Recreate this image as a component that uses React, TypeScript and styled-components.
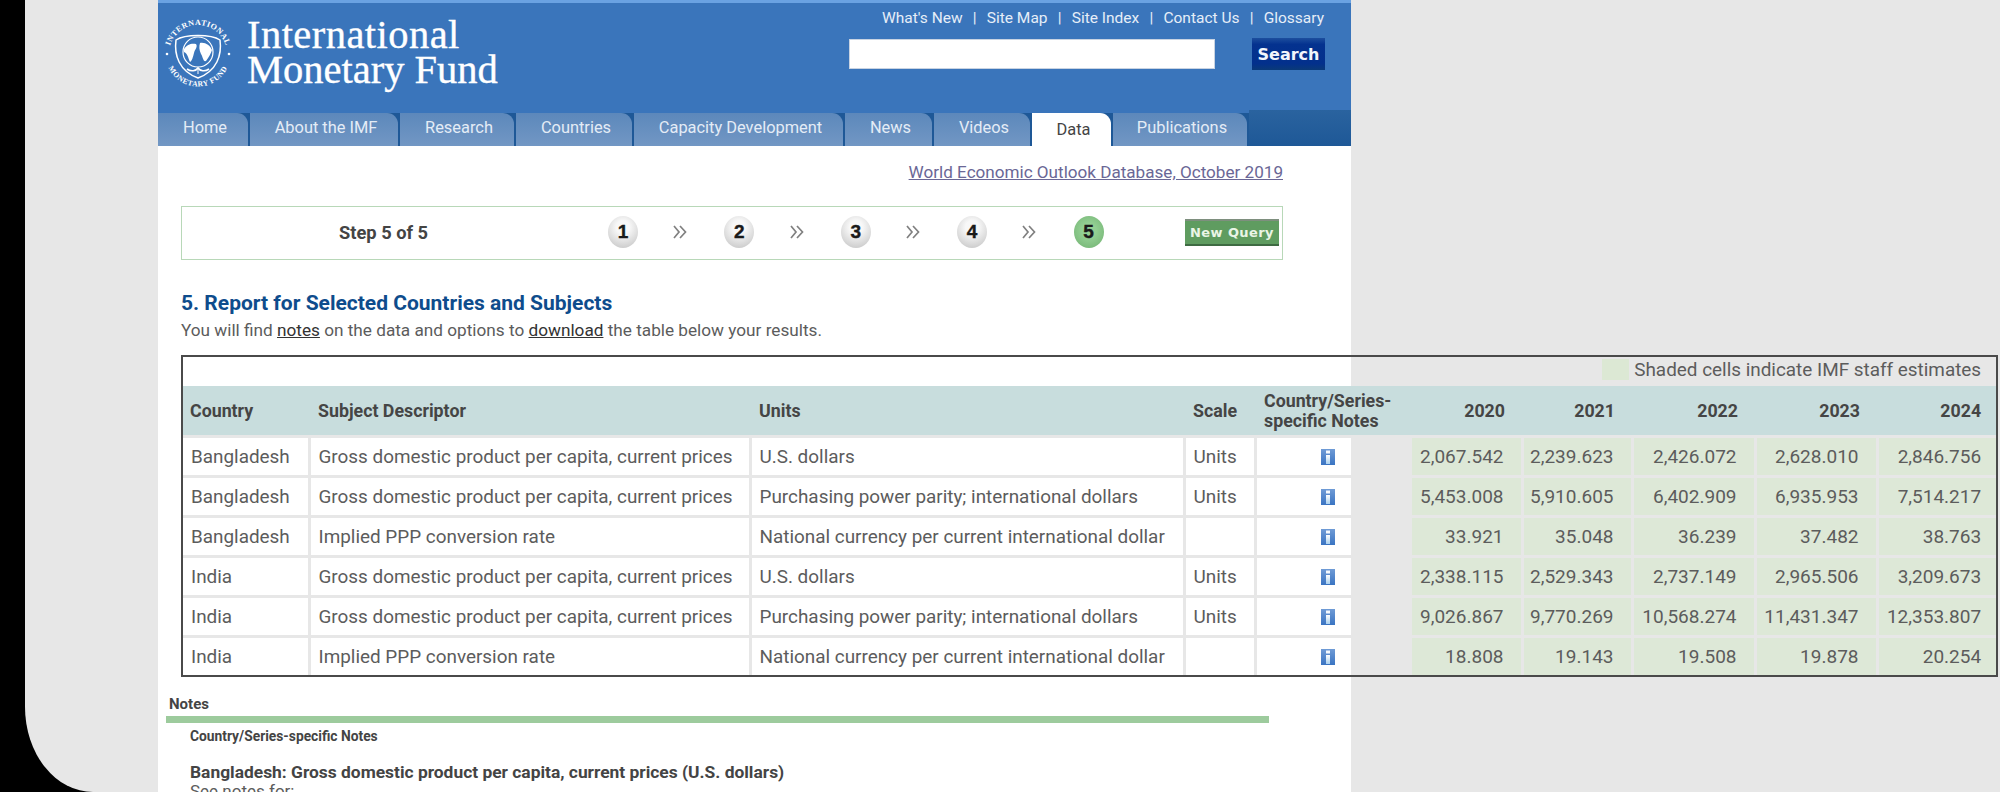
import React from "react";
import styled, { createGlobalStyle } from "styled-components";

const Global = createGlobalStyle`
  html, body { margin: 0; padding: 0; background: #000; }
  body { font-family: Roboto, "Liberation Sans", sans-serif; color: #555; width: 2000px; height: 792px; overflow: hidden; }
`;

const Screen = styled.div`
  width: 1975px; height: 792px; margin-left: 25px; background: #e7e7e7;
  border-bottom-left-radius: 68px 85px; overflow: hidden;
`;
const Sheet = styled.div`
  width: 1193px; height: 792px; margin-left: 133px; background: #fff;
`;
const Header = styled.header`
  height: 146px; background: #3a75bb; border-top: 3px solid #6aa2e2; box-sizing: border-box;
  display: flex; flex-direction: column;
`;
const Masthead = styled.div`
  flex: 1; display: flex; justify-content: space-between; min-height: 0;
`;
const Brand = styled.div`
  display: flex; align-items: flex-start; padding: 14px 0 0 5px; gap: 14px;
`;
const SealSlot = styled.div`
  margin-top: 2px; line-height: 0;
`;
const Wordmark = styled.div`
  font-family: "Liberation Serif", serif; font-size: 40.5px; line-height: 35px; color: #fff; white-space: nowrap;
  -webkit-text-stroke: .35px #fff;
`;
const WordmarkWide = styled.span`
  letter-spacing: .45px;
`;
const Utility = styled.div`
  width: 490px; padding: 7px 26px 0 0; box-sizing: border-box;
  display: flex; flex-direction: column; align-items: flex-end;
`;
const UtilLinks = styled.nav`
  display: flex; gap: 10.2px; font-size: 15.5px; line-height: 17px; color: #e6eef8; white-space: nowrap; margin-right: 1px;
`;
const SearchRow = styled.div`
  display: flex; align-items: center; gap: 37px; margin-top: 11px;
`;
const SearchInput = styled.div`
  width: 366px; height: 30px; box-sizing: border-box; background: #fff; border: 1px solid #c8d3e2;
`;
const SearchButton = styled.div`
  width: 73px; height: 32px; box-sizing: border-box;
  display: flex; align-items: center; justify-content: center;
  background: linear-gradient(#1d4f9e, #04328f 20%, #03308c 80%, #0a3a78);
  color: #f2f6fc; font: bold 16px "DejaVu Sans", sans-serif;
`;
const TabRail = styled.nav`
  height: 36px; display: flex; align-items: flex-end; flex: none;
  background: linear-gradient(transparent 3px, #1e5897 3px);
`;
const Tab = styled.div<{ $w: number; $active?: boolean }>`
  width: ${(p) => p.$w}px; height: 33px; flex: none; box-sizing: border-box;
  margin-right: 2px; border-top-right-radius: 11px; white-space: nowrap;
  display: flex; align-items: center; justify-content: center; font-size: 16.4px;
  padding: 0 0 ${(p) => (p.$active ? 0 : 5)}px 4px;
  background: ${(p) => (p.$active ? "#fff" : "linear-gradient(#5c88bb, #7297c4)")};
  color: ${(p) => (p.$active ? "#444" : "#e4ecf6")};
`;
const TabFill = styled.div`
  flex: 1; height: 36px; background: linear-gradient(#2a639f, #1e5897);
`;
const Content = styled.main`
  padding: 0 0 0 23px; width: 1817px;
`;
const DbLink = styled.div`
  width: 1102px; text-align: right; margin-top: 15px; font-size: 17.1px; line-height: 22px;
  color: #6a6796; text-decoration: underline;
`;
const StepBox = styled.section`
  width: 1102px; height: 54px; margin-top: 23px; box-sizing: border-box;
  border: 1px solid #b8d8b8; display: flex; align-items: center; padding: 0 3px 2px 157px;
`;
const StepLabel = styled.div`
  width: 269px; flex: none; font-weight: 700; font-size: 18.3px; color: #444;
`;
const Steps = styled.div`
  display: flex; align-items: center; gap: 36.2px; flex: 1;
`;
const StepDot = styled.div<{ $active?: boolean }>`
  width: 30px; height: 32px; border-radius: 50%; flex: none;
  display: flex; align-items: center; justify-content: center;
  font: bold 19px "Liberation Sans", sans-serif; color: #1a1a1a;
  -webkit-text-stroke: .4px #1a1a1a;
  background: ${(p) => p.$active
    ? "radial-gradient(circle at 50% 45%, #93cf93 30%, #6fb06f)"
    : "radial-gradient(circle at 50% 35%, #f8f8f8 25%, #bfbfbf)"};
`;
const ChevronMark = styled.svg`
  flex: none; margin: 0 1px 0 -1px;
`;
const NewQuery = styled.div`
  width: 94px; height: 27px; box-sizing: border-box; flex: none;
  display: flex; align-items: center; justify-content: center; white-space: nowrap;
  background: #5f9c60; border-top: 2px solid #7e8f7e; border-bottom: 2px solid #3e6b42;
  color: #eaf5e6; font: bold 13px "DejaVu Sans", sans-serif; letter-spacing: .4px;
`;
const Heading = styled.h2`
  margin: 31px 0 0; font-size: 21px; line-height: 24px; font-weight: 700; color: #0e4c8c;
`;
const Lead = styled.p`
  margin: 5px 0 0; font-size: 17.2px; line-height: 20px; color: #5c5c5c;
  u { color: #333; }
`;
const TableFrame = styled.div`
  margin-top: 15px; width: 1817px; box-sizing: border-box; border: 2px solid #4a4a4a;
`;
const ReportTable = styled.table`
  width: 1813px; table-layout: fixed; border-collapse: collapse; border-style: hidden;
`;
const LegendCell = styled.td`
  height: 29px; padding: 0 15px 0 0; text-align: right; font-size: 18.9px; color: #5c5c5c; vertical-align: middle;
`;
const Legend = styled.span`
  display: inline-flex; align-items: center; gap: 5px; white-space: nowrap;
`;
const Swatch = styled.i`
  display: block; width: 27px; height: 21px; background: #dce8d4;
`;
const HeadCell = styled.th<{ $right?: boolean }>`
  height: 48px; padding: 1px ${(p) => (p.$right ? 17 : 4)}px 0 ${(p) => (p.$right ? 0 : 9)}px;
  background: #c8dddd; border-bottom: 2px solid #333; color: #454545;
  font-size: 17.8px; line-height: 20px; font-weight: 700;
  text-align: ${(p) => (p.$right ? "right" : "left")}; vertical-align: middle;
  &:first-child { padding-left: 7px; }
  &:last-child { padding-right: 15px; }
`;
const Cell = styled.td<{ $right?: boolean; $shaded?: boolean }>`
  height: 37px; box-sizing: content-box; padding: 0 ${(p) => (p.$right ? 17 : 2)}px 0 ${(p) => (p.$right ? 0 : 8)}px;
  border: 3px solid #e7e7e7; white-space: nowrap; overflow: hidden;
  font-size: ${(p) => (p.$right ? 19 : 18.9)}px; color: #5c5c5c; vertical-align: middle;
  text-align: ${(p) => (p.$right ? "right" : "left")};
  background: ${(p) => (p.$shaded ? "#dde8d7" : "transparent")};
  &:last-child { padding-right: 15px; }
`;
const IconCell = styled.td`
  padding: 0 0 0 64px; border: 3px solid #e7e7e7; border-right: none; vertical-align: middle;
  line-height: 0;
`;
const NotesLabel = styled.div`
  margin: 18px 0 0 -12px; font-size: 15px; line-height: 18px; font-weight: 700; color: #444;
`;
const GreenRule = styled.div`
  width: 1103px; height: 7px; margin: 3px 0 0 -15px; background: #9dcb9d;
`;
const NotesSub = styled.div`
  margin: 4px 0 0 9px; font-size: 13.8px; line-height: 18px; font-weight: 700; color: #444;
`;
const NoteTitle = styled.div`
  margin: 17px 0 0 9px; font-size: 17.4px; line-height: 20px; font-weight: 700; color: #444;
`;
const NoteBody = styled.div`
  margin: 0 0 0 9px; font-size: 17px; line-height: 18px; color: #5c5c5c;
`;

const Seal = () => (
  <svg width="70" height="70" viewBox="0 0 70 70" fill="none">
    <defs>
      <path id="sealTop" d="M6 35 A29 29 0 0 1 64 35" />
      <path id="sealBottom" d="M2.5 35 A32.5 32.5 0 0 0 67.5 35" />
    </defs>
    <text fontFamily="Liberation Serif, serif" fontSize="8" fontWeight="700" fill="#fff" letterSpacing=".5">
      <textPath href="#sealTop" startOffset="50%" textAnchor="middle">INTERNATIONAL</textPath>
    </text>
    <text fontFamily="Liberation Serif, serif" fontSize="7.6" fontWeight="700" fill="#fff" letterSpacing=".5">
      <textPath href="#sealBottom" startOffset="50%" textAnchor="middle">MONETARY FUND</textPath>
    </text>
    <circle cx="4" cy="35" r="1.3" fill="#fff" />
    <circle cx="66" cy="35" r="1.3" fill="#fff" />
    <path d="M13 21 C22 15 48 15 57 21 C59 36 54 52 35 59 C16 52 11 36 13 21 Z" stroke="#fff" strokeWidth="1.5" />
    <circle cx="35" cy="33" r="15" stroke="#fff" strokeWidth="1.2" />
    <path d="M21 30 C24 25 29 24 33 25 C35 28 32 30 31 34 C30 38 29 42 27 43 C25 39 25 35 21 33 Z" fill="#fff" />
    <path d="M37 24 C42 23 47 26 49 31 C48 34 46 38 43 42 C40 43 40 38 38 35 C36 31 36 27 37 24 Z" fill="#fff" />
    <path d="M24 50 C28 53 33 52 35 49 C37 52 42 53 46 50" stroke="#fff" strokeWidth="1.6" />
    <path d="M35 49 V55" stroke="#fff" strokeWidth="1" />
  </svg>
);

const Chevrons = () => (
  <ChevronMark width="14" height="14" viewBox="0 0 14 14" fill="none" stroke="#808080" strokeWidth="1.7">
    <path d="M1 1 L6 7 L1 13 M7 1 L12.5 7 L7 13" />
  </ChevronMark>
);

const InfoIcon = () => (
  <svg width="14" height="16" viewBox="0 0 14 16">
    <defs>
      <linearGradient id="infoGrad" x1="0" y1="0" x2="0" y2="1">
        <stop offset="0" stopColor="#6f9bd6" />
        <stop offset="1" stopColor="#3a74c2" />
      </linearGradient>
      <linearGradient id="infoStem" x1="0" y1="0" x2="0" y2="1">
        <stop offset="0" stopColor="#ffffff" />
        <stop offset="1" stopColor="#a8d0ef" />
      </linearGradient>
    </defs>
    <rect width="14" height="16" fill="url(#infoGrad)" />
    <rect x="5" y="1.5" width="4" height="3" fill="#f4f8fd" />
    <rect x="5" y="6" width="4" height="9" fill="url(#infoStem)" />
  </svg>
);

const tabs: [string, number][] = [
  ["Home", 90], ["About the IMF", 148], ["Research", 114], ["Countries", 116],
  ["Capacity Development", 209], ["News", 87], ["Videos", 96], ["Data", 79], ["Publications", 134],
];
const links = ["What's New", "|", "Site Map", "|", "Site Index", "|", "Contact Us", "|", "Glossary"];
const widths = [126, 441, 434, 71, 155, 112, 110, 123, 122, 119];
const years = [2020, 2021, 2022, 2023, 2024];
const G = "Gross domestic product per capita, current prices";
const P = "Purchasing power parity; international dollars";
const N = "National currency per current international dollar";
const I = "Implied PPP conversion rate";
const rows: [string, string, string, string, string[]][] = [
  ["Bangladesh", G, "U.S. dollars", "Units", ["2,067.542", "2,239.623", "2,426.072", "2,628.010", "2,846.756"]],
  ["Bangladesh", G, P, "Units", ["5,453.008", "5,910.605", "6,402.909", "6,935.953", "7,514.217"]],
  ["Bangladesh", I, N, "", ["33.921", "35.048", "36.239", "37.482", "38.763"]],
  ["India", G, "U.S. dollars", "Units", ["2,338.115", "2,529.343", "2,737.149", "2,965.506", "3,209.673"]],
  ["India", G, P, "Units", ["9,026.867", "9,770.269", "10,568.274", "11,431.347", "12,353.807"]],
  ["India", I, N, "", ["18.808", "19.143", "19.508", "19.878", "20.254"]],
];

export default function App() {
  return (
    <>
      <Global />
      <Screen>
        <Sheet>
          <Header>
            <Masthead>
              <Brand>
                <SealSlot><Seal /></SealSlot>
                <Wordmark><WordmarkWide>International</WordmarkWide><br />Monetary Fund</Wordmark>
              </Brand>
              <Utility>
                <UtilLinks>{links.map((l, i) => <span key={i}>{l}</span>)}</UtilLinks>
                <SearchRow>
                  <SearchInput />
                  <SearchButton>Search</SearchButton>
                </SearchRow>
              </Utility>
            </Masthead>
            <TabRail>
              {tabs.map(([t, w]) => <Tab key={t} $w={w} $active={t === "Data"}>{t}</Tab>)}
              <TabFill />
            </TabRail>
          </Header>
          <Content>
            <DbLink>World Economic Outlook Database, October 2019</DbLink>
            <StepBox>
              <StepLabel>Step 5 of 5</StepLabel>
              <Steps>
                {[1, 2, 3, 4, 5].map((n) => (
                  <React.Fragment key={n}>
                    <StepDot $active={n === 5}>{n}</StepDot>
                    {n < 5 && <Chevrons />}
                  </React.Fragment>
                ))}
              </Steps>
              <NewQuery>New Query</NewQuery>
            </StepBox>
            <Heading>5. Report for Selected Countries and Subjects</Heading>
            <Lead>You will find <u>notes</u> on the data and options to <u>download</u> the table below your results.</Lead>
            <TableFrame>
              <ReportTable>
                <colgroup>{widths.map((w, i) => <col key={i} style={{ width: w }} />)}</colgroup>
                <tbody>
                  <tr>
                    <LegendCell colSpan={10}>
                      <Legend><Swatch />Shaded cells indicate IMF staff estimates</Legend>
                    </LegendCell>
                  </tr>
                  <tr>
                    <HeadCell>Country</HeadCell>
                    <HeadCell>Subject Descriptor</HeadCell>
                    <HeadCell>Units</HeadCell>
                    <HeadCell>Scale</HeadCell>
                    <HeadCell>Country/Series-specific Notes</HeadCell>
                    {years.map((y) => <HeadCell key={y} $right>{y}</HeadCell>)}
                  </tr>
                  {rows.map((r, i) => (
                    <tr key={i}>
                      <Cell>{r[0]}</Cell>
                      <Cell>{r[1]}</Cell>
                      <Cell>{r[2]}</Cell>
                      <Cell>{r[3]}</Cell>
                      <IconCell><InfoIcon /></IconCell>
                      {r[4].map((v, j) => <Cell key={j} $right $shaded>{v}</Cell>)}
                    </tr>
                  ))}
                </tbody>
              </ReportTable>
            </TableFrame>
            <NotesLabel>Notes</NotesLabel>
            <GreenRule />
            <NotesSub>Country/Series-specific Notes</NotesSub>
            <NoteTitle>Bangladesh: Gross domestic product per capita, current prices (U.S. dollars)</NoteTitle>
            <NoteBody>See notes for:</NoteBody>
          </Content>
        </Sheet>
      </Screen>
    </>
  );
}
